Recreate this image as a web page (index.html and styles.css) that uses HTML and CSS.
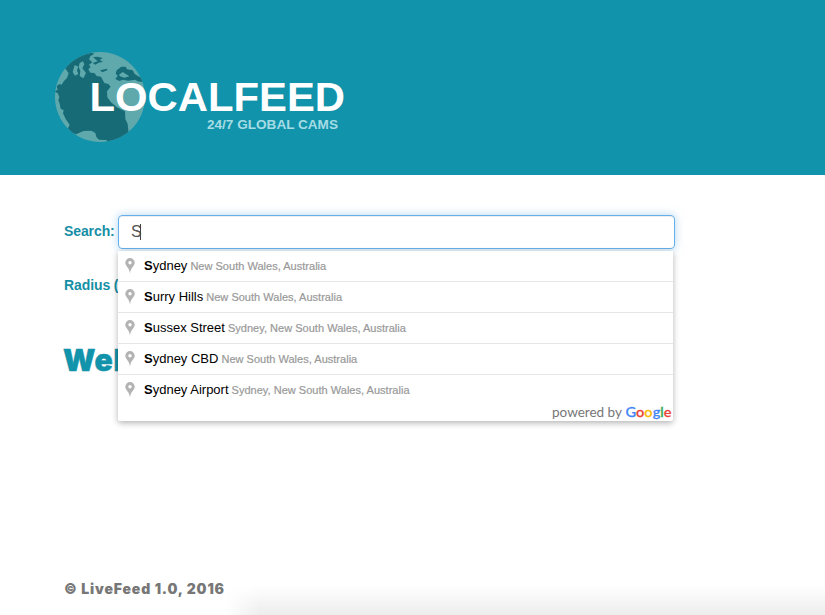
FILE: index.html
```html
<!DOCTYPE html>
<html lang="en">
<head>
<meta charset="utf-8">
<title>LocalFeed</title>
<link rel="stylesheet" href="styles.css">
</head>
<body>
<header class="banner">
  <svg class="logo" viewBox="0 0 315 115" role="img">
    <defs><clipPath id="disc"><circle cx="165" cy="171" r="135"/></clipPath></defs>
    <g transform="scale(.33333)" clip-path="url(#disc)">
      <rect width="450" height="345" fill="#5fa9ac"/>
      <path fill="#166b76" d="M28 155L38 149L35 139L43 132L50 134L57 123L66 114L71 100L60 84L76 64L105 45L139 38L148 41L136 49L132 58L142 67L132 74L137 81L130 88L136 98L148 99L155 108L168 110L178 129L190 132L197 140L186 154L187 172L198 187L216 202L240 214L241 237L248 252L251 280L230 294L184 310L186 300L162 299L154 291L151 279L139 272L116 273L93 283L80 278L69 265L74 254L62 237L54 220L56 211L47 206L44 191L40 181L43 171L38 159Z"/>
      <path fill="#5fa9ac" d="M89 75L100 80L96 91L100 102L90 107L83 96ZM104 69L114 64L118 73L112 85L123 99L115 115L104 108L106 93L101 81Z"/>
      <path fill="#166b76" d="M144 51L158 50L173 54L164 60L174 65L161 68L151 74L143 69L158 64ZM165 91L185 86L188 90L172 97ZM215 91L229 80L242 80L246 88L263 91L269 102L280 109L292 115L297 127L278 124L271 119L249 122L234 119L223 123L211 117L218 107L212 101Z"/>
      <path fill="#5fa9ac" d="M222 104L233 96L246 104L253 109L238 113L225 109Z"/>
    </g>
    <text class="name" x="44.500" y="70.5" textLength="255.500" lengthAdjust="spacingAndGlyphs">LOCALFEED</text>
    <text class="tagline" x="162" y="89" textLength="131" lengthAdjust="spacingAndGlyphs">24/7 GLOBAL CAMS</text>
  </svg>
</header>
<main class="content">
  <div class="search-row">
    <label class="label" for="search">Search:</label>
    <div class="field">
      <div class="input" id="search"><span>S</span><i class="caret"></i></div>
      <div class="menu">
        <div class="item"><svg class="pin" viewBox="0 0 10 16"><path fill-rule="evenodd" d="M5 0a4.7 4.7 0 0 0-4.7 4.7C.3 8.2 4.4 9.3 5 15.5 5.6 9.3 9.7 8.2 9.7 4.7A4.7 4.7 0 0 0 5 0Zm0 3.1a1.7 1.7 0 1 1 0 3.4 1.7 1.7 0 0 1 0-3.4Z"/></svg><span class="place"><b>S</b>ydney</span><span class="region">New South Wales, Australia</span></div>
        <div class="item"><svg class="pin" viewBox="0 0 10 16"><path fill-rule="evenodd" d="M5 0a4.7 4.7 0 0 0-4.7 4.7C.3 8.2 4.4 9.3 5 15.5 5.6 9.3 9.7 8.2 9.7 4.7A4.7 4.7 0 0 0 5 0Zm0 3.1a1.7 1.7 0 1 1 0 3.4 1.7 1.7 0 0 1 0-3.4Z"/></svg><span class="place"><b>S</b>urry Hills</span><span class="region">New South Wales, Australia</span></div>
        <div class="item"><svg class="pin" viewBox="0 0 10 16"><path fill-rule="evenodd" d="M5 0a4.7 4.7 0 0 0-4.7 4.7C.3 8.2 4.4 9.3 5 15.5 5.6 9.3 9.7 8.2 9.7 4.7A4.7 4.7 0 0 0 5 0Zm0 3.1a1.7 1.7 0 1 1 0 3.4 1.7 1.7 0 0 1 0-3.4Z"/></svg><span class="place"><b>S</b>ussex Street</span><span class="region">Sydney, New South Wales, Australia</span></div>
        <div class="item"><svg class="pin" viewBox="0 0 10 16"><path fill-rule="evenodd" d="M5 0a4.7 4.7 0 0 0-4.7 4.7C.3 8.2 4.4 9.3 5 15.5 5.6 9.3 9.7 8.2 9.7 4.7A4.7 4.7 0 0 0 5 0Zm0 3.1a1.7 1.7 0 1 1 0 3.4 1.7 1.7 0 0 1 0-3.4Z"/></svg><span class="place"><b>S</b>ydney CBD</span><span class="region">New South Wales, Australia</span></div>
        <div class="item"><svg class="pin" viewBox="0 0 10 16"><path fill-rule="evenodd" d="M5 0a4.7 4.7 0 0 0-4.7 4.7C.3 8.2 4.4 9.3 5 15.5 5.6 9.3 9.7 8.2 9.7 4.7A4.7 4.7 0 0 0 5 0Zm0 3.1a1.7 1.7 0 1 1 0 3.4 1.7 1.7 0 0 1 0-3.4Z"/></svg><span class="place"><b>S</b>ydney Airport</span><span class="region">Sydney, New South Wales, Australia</span></div>
        <svg class="credit" viewBox="0 0 122 18"><text class="by" x="1" y="13" textLength="70" lengthAdjust="spacingAndGlyphs">powered by</text><text class="google" x="74.500" y="13" textLength="46" lengthAdjust="spacingAndGlyphs"><tspan class="blue">G</tspan><tspan class="red">o</tspan><tspan class="yellow">o</tspan><tspan class="blue">g</tspan><tspan class="green">l</tspan><tspan class="red">e</tspan></text></svg>
      </div>
    </div>
  </div>
  <div class="label radius">Radius (</div>
  <h1 class="welcome">Wel</h1>
</main>
<footer class="footer">© LiveFeed 1.0, 2016</footer>
<div class="shade"></div>
</body>
</html>
```

FILE: styles.css
```css
* { box-sizing: border-box; }
body {
  margin: 0;
  height: 615px;
  position: relative;
  overflow: hidden;
  display: flex;
  flex-direction: column;
  background: #fff;
  font-family: "Liberation Sans", Arial, sans-serif;
}
.banner { height: 175px; flex: none; padding: 40px 0 0 45px; background: #1193ab; }
.logo { display: block; width: 315px; height: 115px; }
.name { font: 700 40px "Liberation Sans", Arial, sans-serif; fill: #fff; }
.tagline { font: 700 12px "Liberation Sans", Arial, sans-serif; fill: #a5dce4; }
.content { padding: 40px 0 0 64px; height: 400px; flex: none; }
.search-row { display: flex; height: 34px; }
.label { width: 54px; flex: none; color: #168fa6; font-size: 14px; font-weight: 700; line-height: 32px; letter-spacing: -.1px; white-space: nowrap; }
.field { position: relative; width: 557px; }
.input {
  display: flex;
  align-items: center;
  height: 34px;
  padding: 0 12px;
  border: 1px solid #66afe9;
  border-radius: 4px;
  box-shadow: inset 0 1px 1px rgba(0,0,0,.075), 0 0 8px rgba(102,175,233,.5);
  color: #555;
  font-size: 16px;
}
.caret { width: 1px; height: 16px; margin-left: -1.500px; background: #444; }
.menu {
  position: absolute;
  top: 36px;
  left: 0;
  z-index: 2;
  width: 555px;
  height: 170px;
  background: #fff;
  border-radius: 0 0 2px 2px;
  box-shadow: 0 2px 6px rgba(0,0,0,.3);
}
.item { display: flex; align-items: baseline; height: 31px; padding-left: 6.500px; line-height: 29px; border-bottom: 1px solid #e6e6e6; white-space: nowrap; }
.item:nth-child(5) { border-bottom: 0; height: 30px; }
.pin { width: 10px; height: 16px; margin-right: 9.500px; align-self: center; fill: #b3b3b3; }
.place { color: #000; font-size: 13px; margin-right: 3px; }
.region { color: #999; font-size: 11px; letter-spacing: .02px; -webkit-text-stroke: .2px #999; }
.credit { display: block; width: 122px; height: 18px; margin: -1px 0 0 auto; }
.by { font: 12.5px Lato, sans-serif; fill: #777; }
.google { font: 500 14px Lato, sans-serif; stroke-width: .3px; }
.blue { fill: #4285f4; stroke: #4285f4; }
.red { fill: #ea4335; stroke: #ea4335; }
.yellow { fill: #fbbc05; stroke: #fbbc05; }
.green { fill: #34a853; stroke: #34a853; }
.radius { margin-top: 20px; }
.welcome { margin: 42px 0 0 -1px; color: #1193ab; font: 900 30px/34px Inter, sans-serif; letter-spacing: .6px; -webkit-text-stroke: .5px #1193ab; }
.footer { position: absolute; left: 64px; top: 580px; color: #777; font: 900 14px/18px Inter, sans-serif; letter-spacing: .84px; white-space: nowrap; }
.shade {
  position: absolute;
  left: 225px;
  right: 0;
  bottom: 0;
  height: 30px;
  background: linear-gradient(rgba(0,0,0,0), rgba(0,0,0,.07));
  -webkit-mask-image: linear-gradient(90deg, transparent, #000 35px);
  mask-image: linear-gradient(90deg, transparent, #000 35px);
}
```
